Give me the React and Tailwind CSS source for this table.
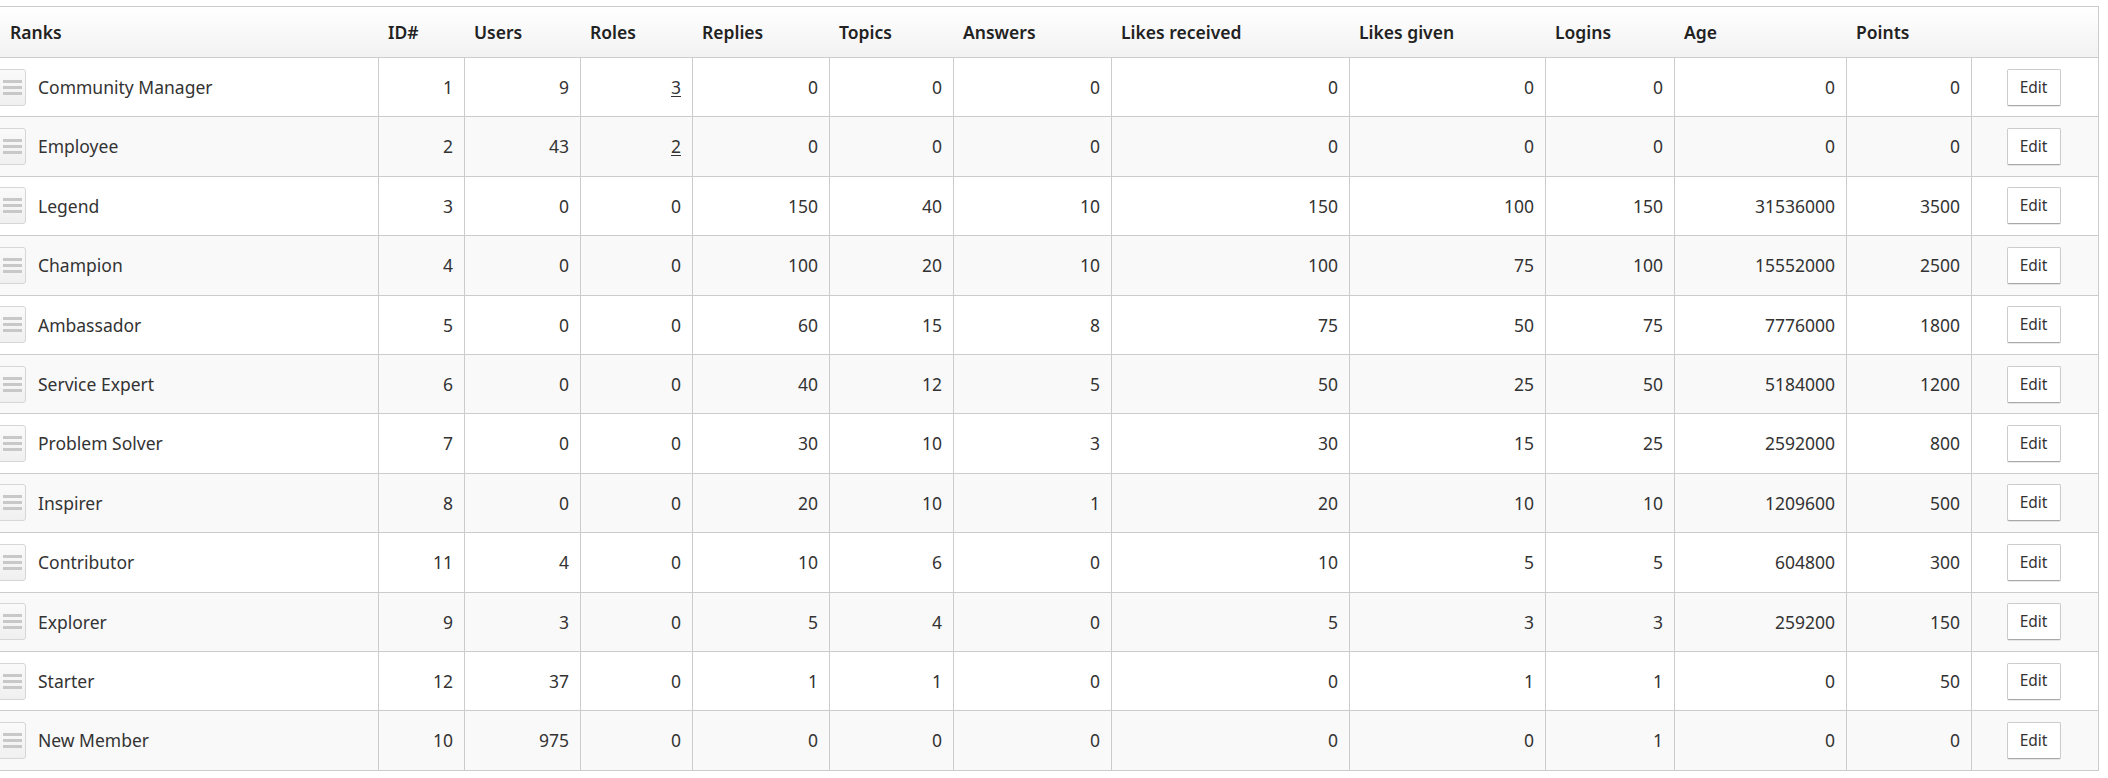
import React from "react";

// Column template shared by header and rows
const cols =
    "grid grid-cols-[378px_86px_116px_112px_137px_124px_158px_238px_196px_129px_172px_125px_128px]";

const headers = [
    "Ranks",
    "ID#",
    "Users",
    "Roles",
    "Replies",
    "Topics",
    "Answers",
    "Likes received",
    "Likes given",
    "Logins",
    "Age",
    "Points",
];

const ranks = [
    ["Community Manager", 1, 9, 3, 0, 0, 0, 0, 0, 0, 0, 0],
    ["Employee", 2, 43, 2, 0, 0, 0, 0, 0, 0, 0, 0],
    ["Legend", 3, 0, 0, 150, 40, 10, 150, 100, 150, 31536000, 3500],
    ["Champion", 4, 0, 0, 100, 20, 10, 100, 75, 100, 15552000, 2500],
    ["Ambassador", 5, 0, 0, 60, 15, 8, 75, 50, 75, 7776000, 1800],
    ["Service Expert", 6, 0, 0, 40, 12, 5, 50, 25, 50, 5184000, 1200],
    ["Problem Solver", 7, 0, 0, 30, 10, 3, 30, 15, 25, 2592000, 800],
    ["Inspirer", 8, 0, 0, 20, 10, 1, 20, 10, 10, 1209600, 500],
    ["Contributor", 11, 4, 0, 10, 6, 0, 10, 5, 5, 604800, 300],
    ["Explorer", 9, 3, 0, 5, 4, 0, 5, 3, 3, 259200, 150],
    ["Starter", 12, 37, 0, 1, 1, 0, 0, 1, 1, 0, 50],
    ["New Member", 10, 975, 0, 0, 0, 0, 0, 0, 1, 0, 0],
];

function DragHandle() {
    return (
        <span className="-ml-[5px] flex h-[37px] w-[31px] shrink-0 flex-col items-center justify-center gap-[3px] rounded-[3px] border border-[#d6d6d6] bg-gradient-to-b from-[#fafafa] to-[#f0f0f0] pl-[3px]">
            <span className="h-[3px] w-[19px] bg-[#c8c8c8]" />
            <span className="h-[3px] w-[19px] bg-[#c8c8c8]" />
            <span className="h-[3px] w-[19px] bg-[#c8c8c8]" />
        </span>
    );
}

function RankRow({ row, index }) {
    const [name, ...nums] = row;
    const striped = index % 2 === 1 ? "bg-[#f9f9f9]" : "bg-white";

    return (
        <div
            className={`${cols} h-[59.4px] border-b border-[#cccccc] ${striped}`}
        >
            <div className="flex items-center gap-[12px] overflow-hidden">
                <DragHandle />
                <span>{name}</span>
            </div>
            {nums.map((n, i) => (
                <div
                    key={i}
                    className="flex items-center justify-end border-l border-[#cccccc] pr-[11px]"
                >
                    {i === 2 && n > 0 ? (
                        <a className="underline underline-offset-2">{n}</a>
                    ) : (
                        n
                    )}
                </div>
            ))}
            <div className="flex items-center justify-center border-x border-[#cccccc] pr-[3px]">
                <button className="h-[37px] w-[54px] rounded-[2px] border border-[#cccccc] border-b-[#a8a8a8] bg-white text-[15.5px] text-[#333] shadow-[0_1px_0_rgba(0,0,0,0.08)]">
                    Edit
                </button>
            </div>
        </div>
    );
}

export default function App() {
    return (
        <div className="min-h-screen bg-white pt-[6px] font-['Noto_Sans',sans-serif] text-[17.5px] text-[#333]">
            <div className="w-[2099px]">
                {/* Header */}
                <div
                    className={`${cols} h-[52px] border-y border-r border-[#cccccc] bg-gradient-to-b from-white to-[#f2f2f2] font-semibold text-[#222]`}
                >
                    {headers.map((h) => (
                        <div key={h} className="flex items-center pl-[10px]">
                            {h}
                        </div>
                    ))}
                    <div />
                </div>
                {ranks.map((row, i) => (
                    <RankRow key={row[0]} row={row} index={i} />
                ))}
            </div>
        </div>
    );
}
